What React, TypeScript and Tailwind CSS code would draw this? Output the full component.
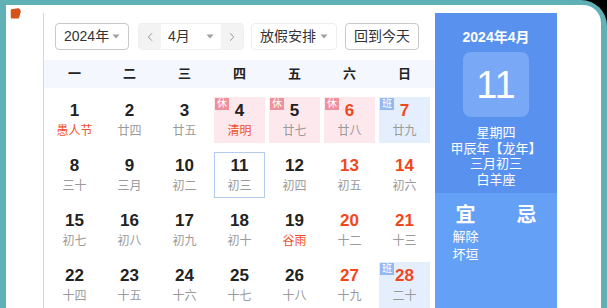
import { ChevronLeft, ChevronRight } from 'lucide-react'

type Day = {
  n: number
  sub: string
  fest?: boolean
  red?: boolean
  tag?: '休' | '班'
  today?: boolean
}

const weeks: Day[][] = [
  [
    { n: 1, sub: '愚人节', fest: true },
    { n: 2, sub: '廿四' },
    { n: 3, sub: '廿五' },
    { n: 4, sub: '清明', fest: true, tag: '休' },
    { n: 5, sub: '廿七', tag: '休' },
    { n: 6, sub: '廿八', red: true, tag: '休' },
    { n: 7, sub: '廿九', red: true, tag: '班' },
  ],
  [
    { n: 8, sub: '三十' },
    { n: 9, sub: '三月' },
    { n: 10, sub: '初二' },
    { n: 11, sub: '初三', today: true },
    { n: 12, sub: '初四' },
    { n: 13, sub: '初五', red: true },
    { n: 14, sub: '初六', red: true },
  ],
  [
    { n: 15, sub: '初七' },
    { n: 16, sub: '初八' },
    { n: 17, sub: '初九' },
    { n: 18, sub: '初十' },
    { n: 19, sub: '谷雨', fest: true },
    { n: 20, sub: '十二', red: true },
    { n: 21, sub: '十三', red: true },
  ],
  [
    { n: 22, sub: '十四' },
    { n: 23, sub: '十五' },
    { n: 24, sub: '十六' },
    { n: 25, sub: '十七' },
    { n: 26, sub: '十八' },
    { n: 27, sub: '十九', red: true },
    { n: 28, sub: '二十', red: true, tag: '班' },
  ],
]

const weekdays = ['一', '二', '三', '四', '五', '六', '日']

function Caret() {
  return (
    <svg width="8" height="5" viewBox="0 0 8 5" className="shrink-0">
      <path d="M0.5 0.5 L7.5 0.5 L4 4.5 Z" fill="#a0a0a0" />
    </svg>
  )
}

function DayCell({ d }: { d: Day }) {
  const bg =
    d.tag === '休'
      ? 'bg-[#fde9ed]'
      : d.tag === '班'
        ? 'bg-[#e5eefd]'
        : 'bg-white'
  const border = d.today ? 'border border-[#b4cbef]' : 'border border-transparent'
  return (
    <div className={`relative h-[46px] flex flex-col items-center pt-[3px] ${bg} ${border}`}>
      {d.tag && (
        <span
          className={`absolute left-0 top-0 w-[14px] h-[12px] flex items-center justify-center text-[10px] leading-none text-white ${
            d.tag === '休' ? 'bg-[#f0909d]' : 'bg-[#94b8f4]'
          }`}
        >
          {d.tag}
        </span>
      )}
      <span className={`text-[17px] leading-[20px] font-bold ${d.red ? 'text-[#f2461c]' : 'text-[#222]'}`}>
        {d.n}
      </span>
      <span className={`mt-[2px] text-[12px] leading-[16px] ${d.fest ? 'text-[#f0502a]' : 'text-[#9a9a9a]'}`}>
        {d.sub}
      </span>
    </div>
  )
}

export default function App() {
  return (
    <div
      className="w-[607px] h-[308px] overflow-hidden bg-black"
      style={{ fontFamily: '"Liberation Sans", "Noto Sans CJK SC", sans-serif' }}
    >
      <div className="h-full bg-[#5fb1b6] rounded-tr-[26px] pt-[5px] pl-[6px] pr-[6px]">
        <div className="relative h-full bg-white rounded-tr-[18px] pl-[37px] pt-[8px]">
          {/* corner mark */}
          <svg width="11" height="11" viewBox="0 0 11 11" className="absolute left-[4px] top-[3px]">
            <path d="M1.5 1.2 L8 0.3 Q9 0.2 9.6 1 L10.6 2.6 Q11 3.3 10.7 4 L9.2 9.6 Q9 10.5 8 10.5 L2 10.5 Q0.8 10.5 0.8 9.4 L0.7 2.2 Q0.7 1.3 1.5 1.2 Z" fill="#d6521c" />
          </svg>

          <div className="flex w-[514px] h-full">
            {/* Calendar */}
            <div className="w-[392px] border-l border-[#c9d9f2]">
              {/* Controls */}
              <div className="flex items-center h-[27px] mt-[10px] pl-[11px] text-[14px] text-[#333]">
                <div className="w-[74px] h-[27px] flex items-center justify-between pl-[8px] pr-[8px] border border-[#c9c9c9] rounded-[4px]">
                  <span>2024年</span>
                  <Caret />
                </div>
                <div className="ml-[9px] h-[27px] flex items-center border border-[#efefef] rounded-[4px] overflow-hidden">
                  <div className="w-[22px] h-full flex items-center justify-center bg-[#f3f3f3] text-[#888]">
                    <ChevronLeft size={14} strokeWidth={1.5} />
                  </div>
                  <div className="w-[60px] h-full flex items-center justify-between pl-[7px] pr-[7px] bg-white">
                    <span>4月</span>
                    <Caret />
                  </div>
                  <div className="w-[22px] h-full flex items-center justify-center bg-[#f3f3f3] text-[#888]">
                    <ChevronRight size={14} strokeWidth={1.5} />
                  </div>
                </div>
                <div className="ml-[7px] w-[86px] h-[27px] flex items-center justify-between pl-[8px] pr-[8px] border border-[#eeeeee] rounded-[4px]">
                  <span>放假安排</span>
                  <Caret />
                </div>
                <div className="ml-[8px] w-[74px] h-[27px] flex items-center justify-center border border-[#c9c9c9] rounded-[4px]">
                  回到今天
                </div>
              </div>

              {/* Weekday header */}
              <div className="mt-[10px] h-[28px] bg-[#f4f7fd] grid grid-cols-[repeat(7,51px)] gap-x-[4px] pl-[5px] items-center">
                {weekdays.map((w) => (
                  <div key={w} className="text-center text-[13px] font-bold text-[#222]">
                    {w}
                  </div>
                ))}
              </div>

              {/* Days */}
              <div className="mt-[9px] grid grid-cols-[repeat(7,51px)] gap-x-[4px] gap-y-[9px] pl-[5px]">
                {weeks.flat().map((d) => (
                  <DayCell key={d.n} d={d} />
                ))}
              </div>
            </div>

            {/* Side panel */}
            <div className="w-[122px] flex flex-col text-white">
              <div className="h-[180px] bg-[#5992ee] flex flex-col items-center pt-[14px]">
                <div className="text-[14px] leading-[20px] font-bold">2024年4月</div>
                <div className="mt-[5px] w-[66px] h-[65px] rounded-[8px] bg-[#78a8f6] flex items-center justify-center text-[38px] leading-none">
                  11
                </div>
                <div className="mt-[8px] text-[13px] leading-[15.5px] text-center">
                  <div>星期四</div>
                  <div>甲辰年【龙年】</div>
                  <div>三月初三</div>
                  <div>白羊座</div>
                </div>
              </div>
              <div className="flex-1 bg-[#65a0f7] grid grid-cols-2 content-start pt-[10px]">
                <div className="flex flex-col items-center">
                  <div className="text-[20px] leading-[24px] font-bold">宜</div>
                  <div className="mt-[1px] text-[13px] leading-[18px] text-center">
                    <div>解除</div>
                    <div>坏垣</div>
                  </div>
                </div>
                <div className="flex flex-col items-center">
                  <div className="text-[20px] leading-[24px] font-bold">忌</div>
                </div>
              </div>
            </div>
          </div>
        </div>
      </div>
    </div>
  )
}
